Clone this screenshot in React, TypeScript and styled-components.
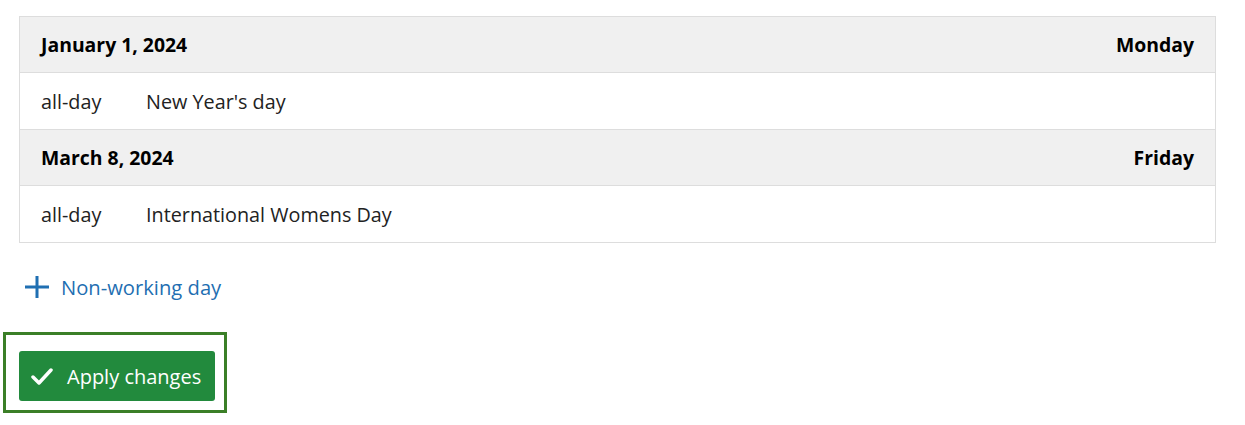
import styled, { createGlobalStyle } from 'styled-components';

const GlobalStyle = createGlobalStyle`
  body {
    margin: 0;
    background: #fff;
    font-family: 'Open Sans', 'Noto Sans', sans-serif;
    color: #222;
  }
`;

const Page = styled.div`
  padding: 16px 29px 0 19px;
`;

const Schedule = styled.div`
  border: 1px solid #dddddd;
  border-bottom: none;
`;

const Row = styled.div<{ $header?: boolean }>`
  display: flex;
  align-items: center;
  height: 55px;
  padding: 0 21px;
  border-bottom: 1px solid #dddddd;
  background: ${(p) => (p.$header ? '#f0f0f0' : '#fff')};
  font-size: ${(p) => (p.$header ? '19.4px' : '19.8px')};
  font-weight: ${(p) => (p.$header ? 700 : 400)};
  color: ${(p) => (p.$header ? '#000' : '#222')};
  &:nth-child(2n) {
    height: 56px;
  }
`;

const DateLabel = styled.span`
  flex: 1;
`;

const TimeLabel = styled.span`
  width: 105px;
`;

const AddLink = styled.a`
  display: inline-flex;
  align-items: center;
  gap: 12px;
  margin: 30px 0 0 6px;
  color: #1f6fb2;
  font-size: 20.2px;
  line-height: 28px;
  text-decoration: none;
  cursor: pointer;
`;

const FocusFrame = styled.div`
  display: inline-block;
  margin: 29px 0 0 -16px;
  padding: 16px 9px 9px 13px;
  border: 3px solid #3b7f27;
`;

const ApplyButton = styled.button`
  display: flex;
  align-items: center;
  gap: 14px;
  height: 50px;
  padding: 0 14px 0 12px;
  border: none;
  border-radius: 3px;
  background: #228a3d;
  color: #fff;
  font-family: inherit;
  font-size: 20px;
  cursor: pointer;
`;

const Holiday = ({ date, weekday, name }: { date: string; weekday: string; name: string }) => (
  <>
    <Row $header>
      <DateLabel>{date}</DateLabel>
      <span>{weekday}</span>
    </Row>
    <Row>
      <TimeLabel>all-day</TimeLabel>
      <span>{name}</span>
    </Row>
  </>
);

export default function App() {
  return (
    <Page>
      <GlobalStyle />
      <Schedule>
        <Holiday date="January 1, 2024" weekday="Monday" name="New Year's day" />
        <Holiday date="March 8, 2024" weekday="Friday" name="International Womens Day" />
      </Schedule>
      <AddLink>
        <svg width="24" height="22" viewBox="0 0 24 22">
          <path d="M12 0v22M0 11h24" stroke="#1f6fb2" strokeWidth="3" fill="none" />
        </svg>
        Non-working day
      </AddLink>
      <div>
        <FocusFrame>
          <ApplyButton>
            <svg width="22" height="17" viewBox="0 0 22 17">
              <path d="M2 9l6 6L20 2" stroke="#fff" strokeWidth="3.5" fill="none" strokeLinecap="round" strokeLinejoin="round" />
            </svg>
            Apply changes
          </ApplyButton>
        </FocusFrame>
      </div>
    </Page>
  );
}
